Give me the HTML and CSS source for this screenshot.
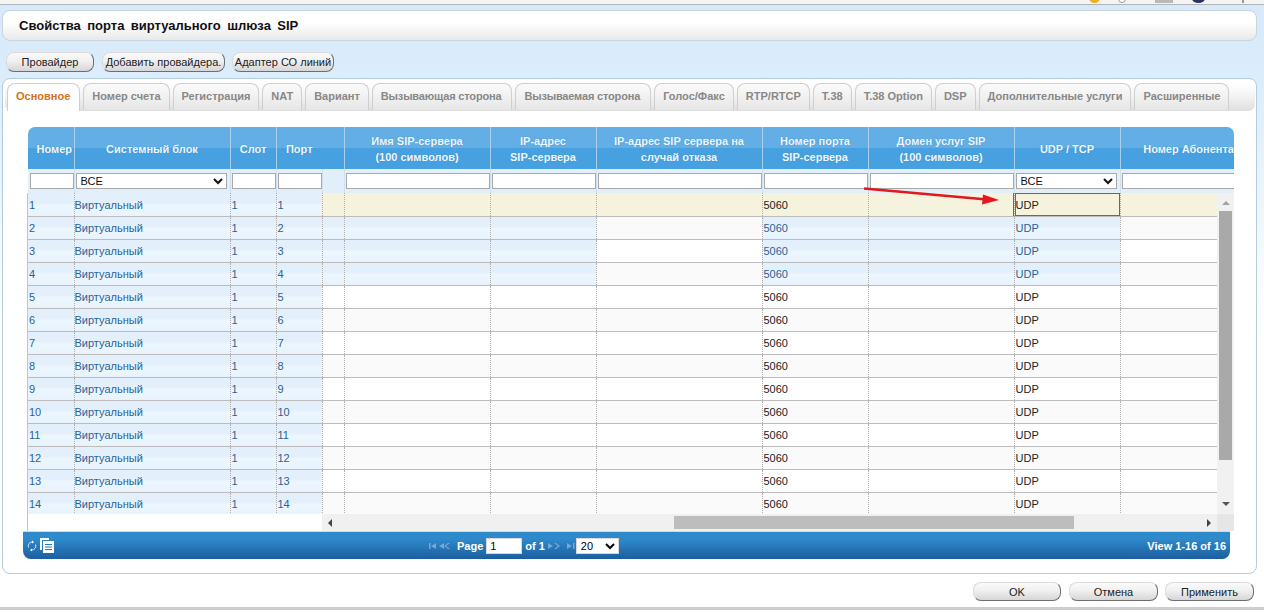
FILE: index.html
```html
<!DOCTYPE html>
<html lang="ru">
<head>
  <meta charset="UTF-8">
  <title>Свойства порта виртуального шлюза SIP</title>
  <link rel="stylesheet" href="styles.css">
</head>
<body>
  <div class="topbar">
    <i class="top-ico orange"></i>
    <i class="top-ico ring"></i>
    <i class="top-ico slab"></i>
    <i class="top-ico navy"></i>
    <i class="top-ico tick"></i>
  </div>

  <div class="page">
    <div class="title-box">Свойства порта виртуального шлюза SIP</div>

    <div class="btn-row">
      <button class="btn w88 push">Провайдер</button>
      <button class="btn w123">Добавить провайдера.</button>
      <button class="btn w102">Адаптер СО линий</button>
    </div>

    <div class="panel">
      <div class="tabs">
        <a class="tab active">Основное</a>
        <a class="tab">Номер счета</a>
        <a class="tab">Регистрация</a>
        <a class="tab">NAT</a>
        <a class="tab">Вариант</a>
        <a class="tab tight">Вызывающая сторона</a>
        <a class="tab tight">Вызываемая сторона</a>
        <a class="tab">Голос/Факс</a>
        <a class="tab">RTP/RTCP</a>
        <a class="tab">T.38</a>
        <a class="tab">T.38 Option</a>
        <a class="tab">DSP</a>
        <a class="tab">Дополнительные услуги</a>
        <a class="tab">Расширенные</a>
      </div>

      <div class="grid">
        <table class="head-table">
          <colgroup>
            <col class="c-num"><col class="c-sys"><col class="c-slot"><col class="c-port"><col class="c-gap">
            <col class="c-name"><col class="c-ip"><col class="c-fail"><col class="c-pnum"><col class="c-dom"><col class="c-udp"><col class="c-last-h">
          </colgroup>
          <tr class="head-row">
            <th class="th-num">Номер</th>
            <th>Системный блок</th>
            <th>Слот</th>
            <th class="no-div">Порт</th>
            <th></th>
            <th>Имя SIP-сервера<br>(100 символов)</th>
            <th>IP-адрес<br>SIP-сервера</th>
            <th>IP-адрес SIP сервера на<br>случай отказа</th>
            <th>Номер порта<br>SIP-сервера</th>
            <th>Домен услуг SIP<br>(100 символов)</th>
            <th>UDP / TCP</th>
            <th class="no-div nowrap">Номер Абонента</th>
          </tr>
          <tr class="filter-row">
            <td><input type="text"></td>
            <td><select><option>ВСЕ</option></select></td>
            <td><input type="text"></td>
            <td><input type="text"></td>
            <td></td>
            <td><input type="text"></td>
            <td><input type="text"></td>
            <td><input type="text"></td>
            <td><input type="text"></td>
            <td><input type="text"></td>
            <td><select><option>ВСЕ</option></select></td>
            <td class="no-div"><input type="text" class="cut"></td>
          </tr>
        </table>

        <div class="grid-mid">
          <div class="rows-clip">
            <table class="rows">
              <colgroup>
                <col class="c-num"><col class="c-sys"><col class="c-slot"><col class="c-port"><col class="c-gap">
                <col class="c-name"><col class="c-ip"><col class="c-fail"><col class="c-pnum"><col class="c-dom"><col class="c-udp"><col class="c-last">
              </colgroup>
              <tr class="sel">
                <td class="fz">1</td><td class="fz">Виртуальный</td><td class="fz">1</td><td class="fz">1</td>
                <td></td><td></td><td></td><td></td><td>5060</td><td></td><td class="cur">UDP</td><td></td>
              </tr>
              <tr class="alt">
                <td class="fz">2</td><td class="fz">Виртуальный</td><td class="fz">1</td><td class="fz">2</td>
                <td class="fz"></td><td class="fz"></td><td class="fz"></td><td></td><td class="fz">5060</td><td class="fz"></td><td class="fz">UDP</td><td></td>
              </tr>
              <tr>
                <td class="fz">3</td><td class="fz">Виртуальный</td><td class="fz">1</td><td class="fz">3</td>
                <td class="fz"></td><td class="fz"></td><td class="fz"></td><td></td><td class="fz">5060</td><td class="fz"></td><td class="fz">UDP</td><td></td>
              </tr>
              <tr class="alt">
                <td class="fz">4</td><td class="fz">Виртуальный</td><td class="fz">1</td><td class="fz">4</td>
                <td class="fz"></td><td class="fz"></td><td class="fz"></td><td></td><td class="fz">5060</td><td class="fz"></td><td class="fz">UDP</td><td></td>
              </tr>
              <tr>
                <td class="fz">5</td><td class="fz">Виртуальный</td><td class="fz">1</td><td class="fz">5</td>
                <td></td><td></td><td></td><td></td><td>5060</td><td></td><td>UDP</td><td></td>
              </tr>
              <tr class="alt">
                <td class="fz">6</td><td class="fz">Виртуальный</td><td class="fz">1</td><td class="fz">6</td>
                <td></td><td></td><td></td><td></td><td>5060</td><td></td><td>UDP</td><td></td>
              </tr>
              <tr>
                <td class="fz">7</td><td class="fz">Виртуальный</td><td class="fz">1</td><td class="fz">7</td>
                <td></td><td></td><td></td><td></td><td>5060</td><td></td><td>UDP</td><td></td>
              </tr>
              <tr class="alt">
                <td class="fz">8</td><td class="fz">Виртуальный</td><td class="fz">1</td><td class="fz">8</td>
                <td></td><td></td><td></td><td></td><td>5060</td><td></td><td>UDP</td><td></td>
              </tr>
              <tr>
                <td class="fz">9</td><td class="fz">Виртуальный</td><td class="fz">1</td><td class="fz">9</td>
                <td></td><td></td><td></td><td></td><td>5060</td><td></td><td>UDP</td><td></td>
              </tr>
              <tr class="alt">
                <td class="fz">10</td><td class="fz">Виртуальный</td><td class="fz">1</td><td class="fz">10</td>
                <td></td><td></td><td></td><td></td><td>5060</td><td></td><td>UDP</td><td></td>
              </tr>
              <tr>
                <td class="fz">11</td><td class="fz">Виртуальный</td><td class="fz">1</td><td class="fz">11</td>
                <td></td><td></td><td></td><td></td><td>5060</td><td></td><td>UDP</td><td></td>
              </tr>
              <tr class="alt">
                <td class="fz">12</td><td class="fz">Виртуальный</td><td class="fz">1</td><td class="fz">12</td>
                <td></td><td></td><td></td><td></td><td>5060</td><td></td><td>UDP</td><td></td>
              </tr>
              <tr>
                <td class="fz">13</td><td class="fz">Виртуальный</td><td class="fz">1</td><td class="fz">13</td>
                <td></td><td></td><td></td><td></td><td>5060</td><td></td><td>UDP</td><td></td>
              </tr>
              <tr class="alt">
                <td class="fz">14</td><td class="fz">Виртуальный</td><td class="fz">1</td><td class="fz">14</td>
                <td></td><td></td><td></td><td></td><td>5060</td><td></td><td>UDP</td><td></td>
              </tr>
            </table>
          </div>
          <div class="vscroll">
            <span class="arr up"></span>
            <span class="vthumb"></span>
            <span class="arr down"></span>
          </div>
        </div>

        <div class="grid-bottom">
          <div class="hscroll">
            <span class="arr left"></span>
            <span class="hthumb"></span>
            <span class="arr right"></span>
          </div>
          <div class="corner"></div>
        </div>

        <svg class="red-arrow" width="140" height="18" viewBox="0 0 140 18">
          <path d="M1 1.5 L124 12.5" stroke="#e3171d" stroke-width="2.4" fill="none"/>
          <path d="M136 13 L120 7.5 L119 17.5 Z" fill="#e3171d"/>
        </svg>
      </div>

      <div class="pager">
        <div class="pager-left">
          <svg class="ico-refresh" width="12" height="14" viewBox="0 0 12 14">
            <path d="M2.5 8.5 A4 4 0 0 1 6.5 3 M9.5 5.5 A4 4 0 0 1 5.5 11" stroke="#fff" stroke-width="0.8" fill="none"/>
            <path d="M6 1.5 L8 3 L6 4.5 Z M6 9.5 L4 11 L6 12.5 Z" fill="#fff"/>
          </svg>
          <svg width="14" height="15" viewBox="0 0 14 15">
            <path d="M0 0 H9 V2 H2 V12 H0 Z" fill="#fff"/>
            <path d="M3 3 H14 V15 H3 Z" fill="#fff"/>
            <path d="M5 6.5 H12 M5 9 H12 M5 11.5 H12" stroke="#2a76b5" stroke-width="1"/>
          </svg>
        </div>
        <div class="pager-mid">
          <svg class="pg-ico" width="26" height="8" viewBox="0 0 26 8">
            <path d="M0 1 H1.5 V7 H0 Z M7 1 V7 L2 4 Z M15 1 V7 L10 4 Z M15 4 L19 1 H21 L17 4 L21 7 H19 Z" fill="#76a8d4"/>
          </svg>
          <b>Page</b>
          <input type="text" class="page-input" value="1">
          <b>of 1</b>
          <svg class="pg-ico" width="27" height="8" viewBox="0 0 27 8">
            <path d="M0 1 V7 L5 4 Z M6 1 L10 4 L6 7 H8 L12 4 L8 1 Z M19 1 V7 L24 4 Z M25 1 H26.5 V7 H25 Z" fill="#76a8d4"/>
          </svg>
          <select class="page-size"><option>20</option></select>
        </div>
        <b class="pager-view">View 1-16 of 16</b>
      </div>
    </div>

    <div class="actions">
      <button class="btn w88 push">OK</button>
      <button class="btn w89">Отмена</button>
      <button class="btn w89">Применить</button>
    </div>
    <div class="bottom-line"></div>
  </div>
</body>
</html>
```

FILE: styles.css
```css
* {
  box-sizing: border-box;
}
html, body {
  height: 100%;
}
body {
  margin: 0;
  overflow: hidden;
  font-family: "Liberation Sans", Arial, sans-serif;
  font-size: 11px;
  color: #222;
  background: linear-gradient(#d6e9fb 0, #dcedfc 90px, #ffffff 330px);
}

/* top strip, the page above is cut off */
.topbar {
  height: 5px;
  background: #f4f4f4;
  border-bottom: 1px solid #b4b4b4;
  overflow: hidden;
  display: flex;
  justify-content: flex-end;
  align-items: flex-end;
  padding-right: 20px;
}
.top-ico {
  display: block;
  flex: none;
}
.orange {
  width: 11px;
  height: 11px;
  margin: 0 18px 1px 0;
  border-radius: 50%;
  background: #f0ad2a;
}
.ring {
  width: 8px;
  height: 8px;
  margin: 0 29px 1px 0;
  border-radius: 50%;
  border: 1px solid #999;
  background: #fff;
}
.slab {
  width: 18px;
  height: 8px;
  margin: 0 19px 1px 0;
  background: #b9b9b9;
}
.navy {
  width: 13px;
  height: 9px;
  margin: 0 37px 1px 0;
  border-radius: 50%;
  background: #2a3463;
}
.tick {
  width: 2px;
  height: 3px;
  margin-bottom: 1px;
  background: #999;
}

.page {
  padding: 5px 7px 0 2px;
}
.title-box {
  height: 31px;
  padding: 0 16px;
  font-size: 13px;
  font-weight: bold;
  line-height: 30px;
  word-spacing: 2.8px;
  color: #111;
  border: 1px solid #c9d4de;
  border-radius: 8px;
  background: linear-gradient(#ffffff, #ffffff 40%, #e9e9e9);
}

.btn-row {
  display: flex;
  gap: 7px;
  margin: 11px 0 6px 4px;
}
.btn {
  height: 20px;
  padding: 0;
  font-family: "Liberation Sans", Arial, sans-serif;
  font-size: 11px;
  color: #222;
  border: 1px solid #dcdcdc;
  border-right-color: #6e6e6e;
  border-bottom-color: #6e6e6e;
  border-radius: 8px;
  background: linear-gradient(#fafafa, #f0f0f0 45%, #d6d6d6);
  cursor: pointer;
}
.btn.push { margin-right: 1px; }
.w88 { width: 88px; }
.w89 { width: 89px; }
.w102 { width: 102px; }
.w123 { width: 123px; }

.panel {
  height: 496px;
  padding: 4px 1px 0 2px;
  border: 1px solid #b4cddd;
  border-radius: 8px;
  background: #fff;
}
.tabs {
  display: flex;
  gap: 3px;
  height: 28px;
  padding-left: 2px;
  border-radius: 7px;
  background: linear-gradient(#ffffff, #f2f2f2 50%, #dedede);
}
.tab {
  height: 27px;
  padding: 0 8px;
  font-size: 11px;
  font-weight: bold;
  line-height: 24px;
  white-space: nowrap;
  color: #888;
  border: 1px solid #cfcfcf;
  border-bottom: 0;
  border-radius: 8px 8px 0 0;
  background: linear-gradient(#fbfbfb, #e6e6e6);
}
.tab.tight {
  padding-right: 10px;
  letter-spacing: -0.17px;
}
.tab.active {
  height: 28px;
  padding-right: 9px;
  color: #d2711d;
  background: #fff;
}

/* grid */
.grid {
  position: relative;
  width: 1206px;
  margin: 16px 0 0 23px;
}
.grid table {
  border-collapse: collapse;
  table-layout: fixed;
}
.head-table {
  width: 1206px;
}
.rows {
  width: 1189px;
}
.c-num { width: 46px; }
.c-sys { width: 156px; }
.c-slot { width: 46px; }
.c-port { width: 46px; }
.c-gap { width: 22px; }
.c-name { width: 146px; }
.c-ip { width: 106px; }
.c-fail { width: 166px; }
.c-pnum { width: 106px; }
.c-dom { width: 146px; }
.c-udp { width: 106px; }
.c-last { width: 97px; }
.c-last-h { width: 114px; }

.head-row th {
  height: 42px;
  padding: 1px 0 0;
  font-size: 11px;
  font-weight: bold;
  line-height: 16px;
  text-align: center;
  color: #edf6fd;
  text-shadow: 0 0 1px #3b8ac4;
  border-right: 1px solid #a9d0ee;
  background: linear-gradient(#63aee5 0, #63aee5 50%, #47a0df 50%, #47a0df 100%);
  overflow: hidden;
}
.head-row th.th-num {
  padding-left: 7px;
  white-space: nowrap;
}
.head-row th.no-div {
  border-right: 0;
}
.head-row th.nowrap {
  white-space: nowrap;
  text-align: right;
}
.head-row th:first-child {
  border-top-left-radius: 7px;
}
.head-row th:last-child {
  border-top-right-radius: 7px;
}
.filter-row td {
  height: 24px;
  padding: 0 0 1px 1px;
  background: #e2eefa;
  border-right: 1px solid #cfe0ef;
  overflow: hidden;
}
.filter-row td:first-child {
  padding-left: 2px;
}
.filter-row td.no-div {
  border-right: 0;
}
.filter-row input {
  display: block;
  width: 100%;
  height: 16px;
  padding: 0 2px;
  border: 1px solid #a9a9a9;
  background: #fff;
}
.filter-row input.cut {
  width: 120px;
}
.filter-row select {
  display: block;
  width: calc(100% - 3px);
  height: 16px;
  padding: 0;
  font-family: "Liberation Sans", Arial, sans-serif;
  font-size: 11px;
  color: #111;
  border: 1px solid #a9a9a9;
  border-radius: 0;
  background: #fff;
}

.grid-mid {
  display: flex;
  height: 321px;
  box-shadow: -1px 0 0 #c4c4c4;
}
.rows-clip {
  width: 1189px;
  overflow: hidden;
}
.rows td {
  height: 23px;
  padding: 1px 0 0 1px;
  font-size: 11px;
  line-height: 14px;
  white-space: nowrap;
  color: #222;
  border-right: 1px dotted #b0b0b0;
  border-bottom: 1px solid #bcbcbc;
  background: #fff;
}
.rows td:nth-child(2) {
  padding-left: 0;
}
.rows .alt td {
  background: #fafafa;
}
.rows td.fz,
.rows .alt td.fz {
  color: #2a6398;
  background: linear-gradient(#e3f0fc, #e3f0fc 45%, #edf6fe 55%, #e8f3fd);
}
.rows .sel td:not(.fz) {
  background: #f5f3dd;
}
.rows .sel td.cur {
  box-shadow: inset 0 0 0 1px #6a6a60, -1px 0 0 #6a6a60;
}

.vscroll {
  flex: 1;
  display: flex;
  flex-direction: column;
  align-items: center;
  background: #f1f1f1;
}
.vthumb {
  width: 13px;
  height: 249px;
  margin-top: 6px;
  background: #a9a9a9;
}
.grid-bottom {
  display: flex;
  height: 17px;
  box-shadow: -1px 0 0 #c4c4c4;
}
.hscroll {
  display: flex;
  align-items: center;
  width: 895px;
  margin-left: 294px;
  padding: 0 6px;
  background: #f0f0f0;
}
.hthumb {
  width: 400px;
  height: 13px;
  margin-left: 342px;
  background: #bdbdbd;
}
.corner {
  flex: 1;
  background: #e6e6e6;
}
.arr {
  display: block;
  width: 0;
  height: 0;
  border-style: solid;
  border-color: transparent;
}
.arr.up {
  margin-top: 8px;
  border-width: 0 4px 4px;
  border-bottom-color: #a3a3a3;
}
.arr.down {
  margin-top: 42px;
  border-width: 4px 4px 0;
  border-top-color: #555;
}
.arr.left {
  border-width: 4px 4px 4px 0;
  border-right-color: #444;
}
.arr.right {
  margin-left: 133px;
  border-width: 4px 0 4px 4px;
  border-left-color: #444;
}
.red-arrow {
  position: absolute;
  left: 835px;
  top: 60px;
  pointer-events: none;
}

/* blue pager under the grid */
.pager {
  display: flex;
  align-items: center;
  width: 1207px;
  height: 28px;
  margin: 0 0 0 18px;
  padding: 0 4px 0 3px;
  font-size: 11px;
  color: #fff;
  border-top: 1px solid #bfe0f7;
  border-radius: 0 0 8px 8px;
  background: linear-gradient(#2f8acb, #2f8acb 25%, #1b5e9f);
}
.pager-left {
  display: flex;
  align-items: center;
  gap: 2px;
  width: 403px;
}
.pager-mid {
  display: flex;
  align-items: center;
  gap: 3px;
  font-size: 11px;
}
.pg-ico {
  margin-right: -1px;
}
.pg-ico:last-of-type {
  margin-right: -2px;
}
.page-input {
  width: 36px;
  height: 16px;
  padding: 0 3px;
  font-family: "Liberation Sans", Arial, sans-serif;
  font-size: 11px;
  border: 1px solid #d8d8d8;
}
.page-size {
  width: 43px;
  height: 16px;
  padding: 0;
  font-family: "Liberation Sans", Arial, sans-serif;
  font-size: 11px;
  border: 1px solid #d8d8d8;
  border-radius: 0;
  background: #fff;
}
.pager-view {
  margin-left: auto;
}

.actions {
  display: flex;
  justify-content: flex-end;
  gap: 7px;
  margin-top: 8px;
  padding-right: 3px;
}
.actions .btn {
  height: 19px;
}
.bottom-line {
  height: 3px;
  margin: 6px -7px 0 -2px;
  background: #cdcdcd;
}
```
